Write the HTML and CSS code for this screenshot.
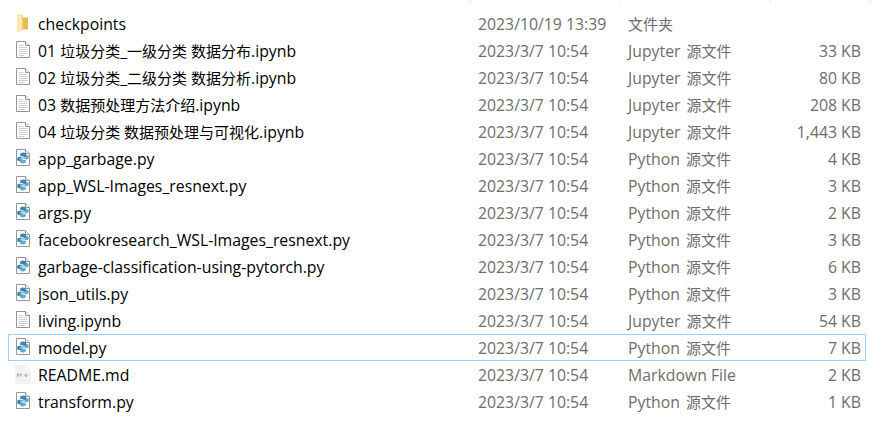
FILE: index.html
```html
<!DOCTYPE html>
<html lang="zh-CN">
<head>
<meta charset="utf-8">
<title>checkpoints</title>
<link rel="stylesheet" href="styles.css">
</head>
<body>
<svg class="defs" width="0" height="0" aria-hidden="true">
  <symbol id="i-folder" viewBox="0 0 16 20">
    <path d="M2 1.500h5l.5 2H13v12H7z" fill="#e8bb55"/>
    <path d="M2 1h5.500v14.500L2 18z" fill="#fce9ad"/>
    <path d="M7.500 1v14.500L2 18" fill="none" stroke="#eccb7a" stroke-width=".8"/>
    <path d="M2 1h5" stroke="#f5d98c" fill="none"/>
  </symbol>
  <symbol id="i-note" viewBox="0 0 16 20">
    <path d="M1.500 .5h9l4 4v12h-13z" fill="#fff" stroke="#959595"/>
    <path d="M10.500 .5v4h4" fill="#efefef" stroke="#959595"/>
    <path d="M3.500 4.500h5M3.500 6.500h9M3.500 8.500h9M3.500 10.500h9M3.500 12.500h9M3.500 14.500h6" stroke="#cfcfcf" fill="none"/>
  </symbol>
  <symbol id="i-py" viewBox="0 0 16 20">
    <path d="M1.500 .5h9l4 4v12h-13z" fill="#fff" stroke="#959595"/>
    <path d="M10.500 .5v4h4" fill="#efefef" stroke="#959595"/>
    <path d="M8 3.500c-2 0-2.800.8-2.800 1.900V7H8.500v.7H4c-1.200 0-1.800 1-1.800 2.200S2.800 12 4 12h1.200v-1.700c0-1 .8-1.800 1.800-1.800h2.600c1 0 1.600-.7 1.600-1.600V5.400C11.200 4.300 10 3.500 8 3.500z" fill="#3585b8"/>
    <path d="M8 14.500c2 0 2.800-.8 2.800-1.900V11H7.500v-.7H12c1.200 0 1.800-1 1.800-2.200S13.200 6 12 6h-1.200v1.700c0 1-.8 1.800-1.800 1.800H6.400c-1 0-1.600.7-1.600 1.600v1.500C4.800 13.700 6 14.500 8 14.500z" fill="#62a9cb"/>
  </symbol>
  <symbol id="i-md" viewBox="0 0 16 20">
    <path d="M0 0h11l5 5v14H0z" fill="#f2f2f2"/>
    <path d="M11 0v5h5z" fill="#fbfbfb"/>
    <path d="M2.500 12V8.500L4.300 10.500 6 8.500V12M11 8v3.500M9.300 10l1.700 1.800 1.700-1.800" stroke="#a6a6a6" fill="none"/>
  </symbol>
</svg>
<div class="ticks"><i class="tick tick-date"></i><i class="tick tick-type"></i><i class="tick tick-size"></i><i class="tick"></i></div>
<main class="list">
  <div class="row"><svg class="icon"><use href="#i-folder"/></svg><span class="name">checkpoints</span><span class="date">2023/10/19 13:39</span><span class="type"><b class="cjk">文件夹</b></span><span class="size"></span></div>
  <div class="row"><svg class="icon"><use href="#i-note"/></svg><span class="name">01 <b class="cjk">垃圾分类</b>_<b class="cjk">一级分类 数据分布</b>.ipynb</span><span class="date">2023/3/7 10:54</span><span class="type">Jupyter <b class="cjk tail">源文件</b></span><span class="size">33 KB</span></div>
  <div class="row"><svg class="icon"><use href="#i-note"/></svg><span class="name">02 <b class="cjk">垃圾分类</b>_<b class="cjk">二级分类 数据分析</b>.ipynb</span><span class="date">2023/3/7 10:54</span><span class="type">Jupyter <b class="cjk tail">源文件</b></span><span class="size">80 KB</span></div>
  <div class="row"><svg class="icon"><use href="#i-note"/></svg><span class="name">03 <b class="cjk">数据预处理方法介绍</b>.ipynb</span><span class="date">2023/3/7 10:54</span><span class="type">Jupyter <b class="cjk tail">源文件</b></span><span class="size">208 KB</span></div>
  <div class="row"><svg class="icon"><use href="#i-note"/></svg><span class="name">04 <b class="cjk">垃圾分类 数据预处理与可视化</b>.ipynb</span><span class="date">2023/3/7 10:54</span><span class="type">Jupyter <b class="cjk tail">源文件</b></span><span class="size">1,443 KB</span></div>
  <div class="row"><svg class="icon"><use href="#i-py"/></svg><span class="name">app_garbage.py</span><span class="date">2023/3/7 10:54</span><span class="type">Python <b class="cjk tail">源文件</b></span><span class="size">4 KB</span></div>
  <div class="row"><svg class="icon"><use href="#i-py"/></svg><span class="name">app_WSL-Images_resnext.py</span><span class="date">2023/3/7 10:54</span><span class="type">Python <b class="cjk tail">源文件</b></span><span class="size">3 KB</span></div>
  <div class="row"><svg class="icon"><use href="#i-py"/></svg><span class="name">args.py</span><span class="date">2023/3/7 10:54</span><span class="type">Python <b class="cjk tail">源文件</b></span><span class="size">2 KB</span></div>
  <div class="row"><svg class="icon"><use href="#i-py"/></svg><span class="name">facebookresearch_WSL-Images_resnext.py</span><span class="date">2023/3/7 10:54</span><span class="type">Python <b class="cjk tail">源文件</b></span><span class="size">3 KB</span></div>
  <div class="row"><svg class="icon"><use href="#i-py"/></svg><span class="name">garbage-classification-using-pytorch.py</span><span class="date">2023/3/7 10:54</span><span class="type">Python <b class="cjk tail">源文件</b></span><span class="size">6 KB</span></div>
  <div class="row"><svg class="icon"><use href="#i-py"/></svg><span class="name">json_utils.py</span><span class="date">2023/3/7 10:54</span><span class="type">Python <b class="cjk tail">源文件</b></span><span class="size">3 KB</span></div>
  <div class="row"><svg class="icon"><use href="#i-note"/></svg><span class="name">living.ipynb</span><span class="date">2023/3/7 10:54</span><span class="type">Jupyter <b class="cjk tail">源文件</b></span><span class="size">54 KB</span></div>
  <div class="row selected"><svg class="icon"><use href="#i-py"/></svg><span class="name">model.py</span><span class="date">2023/3/7 10:54</span><span class="type">Python <b class="cjk tail">源文件</b></span><span class="size">7 KB</span></div>
  <div class="row"><svg class="icon"><use href="#i-md"/></svg><span class="name">README.md</span><span class="date">2023/3/7 10:54</span><span class="type">Markdown File</span><span class="size">2 KB</span></div>
  <div class="row"><svg class="icon"><use href="#i-py"/></svg><span class="name">transform.py</span><span class="date">2023/3/7 10:54</span><span class="type">Python <b class="cjk tail">源文件</b></span><span class="size">1 KB</span></div>
</main>
</body>
</html>
```
FILE: styles.css
```css
html, body {
  margin: 0;
  background: #fff;
}
body {
  width: 887px;
  height: 421px;
  overflow: hidden;
  font-family: "Open Sans", "Noto Sans CJK SC", sans-serif;
  font-size: 15.8px;
}
.defs {
  position: absolute;
}
.ticks {
  display: flex;
  height: 2px;
  padding-left: 470px;
}
.tick {
  box-sizing: border-box;
  border-left: 1px solid #e5e5e5;
}
.tick-date,
.tick-type {
  width: 150px;
}
.tick-size {
  width: 100px;
}
.list {
  padding: 8px 21px 0 8px;
}
.row {
  display: grid;
  grid-template-columns: 15px 448px 150px 1fr 80px;
  align-items: center;
  height: 27px;
  box-sizing: border-box;
  padding: 0 4px 0 6px;
  border: 1px solid transparent;
}
.row.selected {
  border-color: #99d1ff;
}
.icon {
  width: 16px;
  height: 20px;
  display: block;
  align-self: start;
  margin-top: 3px;
}
.name {
  color: #000;
  padding-left: 8px;
  white-space: nowrap;
}
.date, .type, .size {
  color: #6d6d6d;
  white-space: nowrap;
}
.size {
  text-align: right;
}
.cjk {
  font-size: 15px;
  font-weight: 400;
}
.tail {
  margin-left: 2px;
}
```
